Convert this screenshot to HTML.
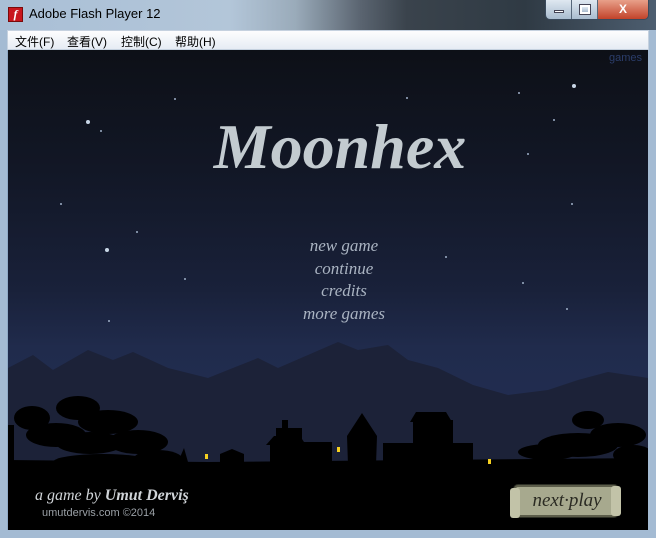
<!DOCTYPE html>
<html><head><meta charset="utf-8"><style>
*{margin:0;padding:0;box-sizing:border-box}
body{width:656px;height:538px;overflow:hidden;background:#8fa9c6;font-family:"Liberation Sans","Noto Sans CJK SC",sans-serif;position:relative}
.title{position:absolute;left:0;top:0;width:656px;height:30px;background:linear-gradient(90deg,#a9bfd6 0%,#b3c6d9 35%,#9aabba 45%,#5a6470 55%,#3a434c 62%,#2f3a44 80%,#4d5e70 100%)}
.title span{position:absolute;left:29px;top:6px;font-size:13px;color:#000}
.logo{position:absolute;left:8px;top:7px;width:15px;height:15px;background:#c8161d;border:1px solid #7a0a0a;color:#fff;font:italic bold 12px "Liberation Serif",serif;text-align:center;line-height:13px}
.btns{position:absolute;left:545px;top:0;width:104px;height:20px;border:1px solid #3a4a5c;border-top:none;border-radius:0 0 5px 5px;overflow:hidden;display:flex}
.btns div{height:19px;background:linear-gradient(#dfe8f1,#a9bccf);border-right:1px solid #56677a;position:relative}
.btns .x{background:linear-gradient(#e8a08a,#c2432a);border:none}
.menu{position:absolute;left:7px;top:30px;width:642px;height:20px;background:linear-gradient(#fdfdfe,#e6ecf4);border:1px solid #c5d1df}
.menu span{position:absolute;top:2px;font-size:12px;color:#000}
.game{position:absolute;left:8px;top:50px;width:640px;height:480px;overflow:hidden;background:linear-gradient(#0d1017 0%,#121726 25%,#19213a 50%,#202b4c 62%,#25315a 100%)}
.frameL{position:absolute;left:0;top:30px;width:7px;height:508px;background:#a4bbd3}
.frameR{position:absolute;right:0;top:30px;width:8px;height:508px;background:#a4bbd3}
.frameB{position:absolute;left:0;top:530px;width:656px;height:8px;background:#a4bbd3}
.st{position:absolute;width:2px;height:2px;background:#9fb0c8;border-radius:50%}
.mt{position:absolute;color:#aab4c2;font:italic 17px "Liberation Serif",serif;text-align:center;width:200px;left:236px}
</style></head><body>
<div class="title"><div class="logo">f</div><span>Adobe Flash Player 12</span>
<div class="btns"><div style="width:27px"><div style="position:absolute;left:8px;top:10px;width:10px;height:3px;background:#fff;border:1px solid #445"></div></div><div style="width:26px"><div style="position:absolute;left:8px;top:5px;width:10px;height:9px;border:2px solid #fff;outline:1px solid #445"></div></div><div class="x" style="width:51px;color:#fff;font-weight:bold;font-size:12px;text-align:center;line-height:18px">X</div></div></div>
<div class="frameL"></div><div class="frameR"></div><div class="frameB"></div>
<div class="menu"><span style="left:7px">文件(F)</span><span style="left:59px">查看(V)</span><span style="left:113px">控制(C)</span><span style="left:167px">帮助(H)</span></div>
<div class="game">
<div style="position:absolute;right:6px;top:2px;font-size:11px;color:#2b3d6a">games</div>
<div class="st" style="left:78px;top:70px;width:4px;height:4px;background:#c8d6e6"></div>
<div class="st" style="left:92px;top:80px"></div>
<div class="st" style="left:166px;top:48px"></div>
<div class="st" style="left:398px;top:47px"></div>
<div class="st" style="left:510px;top:42px"></div>
<div class="st" style="left:564px;top:34px;width:4px;height:4px;background:#c8d6e6"></div>
<div class="st" style="left:545px;top:69px"></div>
<div class="st" style="left:519px;top:103px"></div>
<div class="st" style="left:563px;top:153px"></div>
<div class="st" style="left:97px;top:198px;width:4px;height:4px;background:#c8d6e6"></div>
<div class="st" style="left:128px;top:181px"></div>
<div class="st" style="left:100px;top:270px"></div>
<div class="st" style="left:176px;top:228px"></div>
<div class="st" style="left:514px;top:232px"></div>
<div class="st" style="left:437px;top:206px"></div>
<div class="st" style="left:558px;top:258px"></div>
<div class="st" style="left:52px;top:153px"></div>
<div style="position:absolute;left:192px;top:60px;width:280px;text-align:center;font:italic bold 64px 'Liberation Serif',serif;color:#c3cbd0;letter-spacing:0px">Moonhex</div>
<div class="mt" style="top:186px">new game</div>
<div class="mt" style="top:209px">continue</div>
<div class="mt" style="top:231px">credits</div>
<div class="mt" style="top:254px">more games</div>
<svg style="position:absolute;left:0;top:0" width="640" height="480">
<polygon fill="#1c2238" points="0,318 25,305 45,320 80,300 105,310 125,302 160,318 200,328 225,318 250,308 270,318 300,305 330,292 350,300 380,295 400,310 430,318 465,335 500,345 540,340 570,330 600,322 640,328 640,480 0,480"/>
<polygon fill="#000" points="0,410 200,412 640,408 640,480 0,480"/>
<g fill="#000">
<ellipse cx="24" cy="368" rx="18" ry="12"/><ellipse cx="70" cy="358" rx="22" ry="12"/><ellipse cx="100" cy="372" rx="30" ry="12"/><ellipse cx="48" cy="385" rx="30" ry="12"/><ellipse cx="82" cy="393" rx="34" ry="11"/><ellipse cx="130" cy="392" rx="30" ry="12"/><ellipse cx="150" cy="410" rx="25" ry="10"/><ellipse cx="95" cy="412" rx="50" ry="8"/><rect x="0" y="375" width="6" height="40"/>
<ellipse cx="610" cy="385" rx="28" ry="12"/><ellipse cx="570" cy="395" rx="40" ry="12"/><ellipse cx="580" cy="370" rx="16" ry="9"/><ellipse cx="540" cy="402" rx="30" ry="8"/><ellipse cx="625" cy="405" rx="20" ry="10"/>
<polygon points="170,412 176,398 180,412"/><polygon points="530,412 532,400 536,412"/>
<polygon points="212,415 212,404 224,399 236,404 236,415"/>
<rect x="262" y="392" width="62" height="22"/><polygon points="258,395 266,386 292,386 298,395"/><rect x="268" y="378" width="26" height="18"/><rect x="274" y="370" width="6" height="10"/>
<polygon points="340,415 339,386 354,363 369,386 368,415"/>
<rect x="375" y="393" width="90" height="22"/><polygon points="402,372 408,362 438,362 444,372"/><rect x="405" y="370" width="40" height="28"/>
</g>
<g fill="#f5d020"><rect x="197" y="404" width="3" height="5"/><rect x="329" y="397" width="3" height="5"/><rect x="480" y="409" width="3" height="5"/></g>
</svg>
<div style="position:absolute;left:27px;top:437px;font:italic 16px 'Liberation Serif',serif;color:#d0d4d8">a game by <b>Umut Derviş</b></div>
<div style="position:absolute;left:34px;top:457px;font-size:11px;color:#9aa0a6">umutdervis.com ©2014</div>
<div style="position:absolute;left:506px;top:435px;width:104px;height:32px;background:#a7a98e;border:2px solid #5c5d4a;border-radius:4px;box-shadow:0 0 0 1px #2d2f25"></div>
<div style="position:absolute;left:502px;top:438px;width:10px;height:30px;background:#c2c3a8;border-radius:3px"></div>
<div style="position:absolute;left:603px;top:436px;width:10px;height:30px;background:#c2c3a8;border-radius:3px"></div>
<div style="position:absolute;left:513px;top:440px;width:92px;text-align:center;font:italic 19px 'Liberation Serif',serif;color:#2a2a22">next·play</div>
</div>
</body></html>
